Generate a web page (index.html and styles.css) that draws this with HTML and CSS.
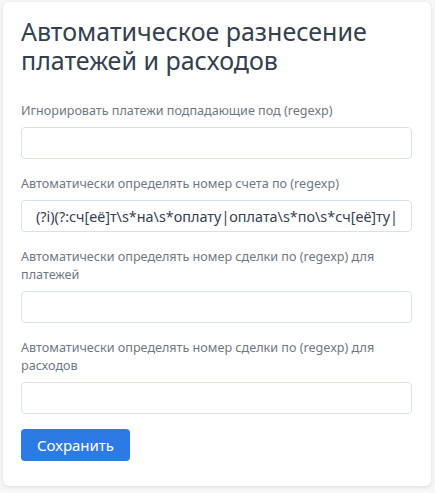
FILE: index.html
```html
<!DOCTYPE html>
<html lang="ru">
<head>
<meta charset="utf-8">
<link rel="stylesheet" href="styles.css">
</head>
<body>
<div class="card">
  <h1 class="title">Автоматическое разнесение платежей и расходов</h1>
  <div class="field">
    <label class="label">Игнорировать платежи подпадающие под (regexp)</label>
    <input class="input" type="text" value="">
  </div>
  <div class="field">
    <label class="label">Автоматически определять номер счета по (regexp)</label>
    <input class="input" type="text" value="(?i)(?:сч[её]т\s*на\s*оплату|оплата\s*по\s*сч[её]ту|">
  </div>
  <div class="field">
    <label class="label">Автоматически определять номер сделки по (regexp) для платежей</label>
    <input class="input" type="text" value="">
  </div>
  <div class="field">
    <label class="label">Автоматически определять номер сделки по (regexp) для расходов</label>
    <input class="input" type="text" value="">
  </div>
  <button class="btn" type="button">Сохранить</button>
</div>
</body>
</html>
```
FILE: styles.css
```css
html, body {
  margin: 0;
  padding: 0;
  background: #f7f7f8;
}
body {
  padding: 2px 4px 6px 3px;
  font-family: "Noto Sans", "Open Sans", sans-serif;
}
.card {
  background: #fff;
  border-radius: 6px;
  box-shadow: 0 1px 4px rgba(0,0,0,0.12);
  padding: 15px 19px 25px 18px;
  display: flex;
  flex-direction: column;
  align-items: flex-start;
}
.title {
  margin: 0 0 27px;
  font-size: 25px;
  line-height: 29px;
  font-weight: 400;
  color: #344050;
}
.field {
  width: 100%;
  display: flex;
  flex-direction: column;
  margin-bottom: 16px;
}
.field:last-of-type {
  margin-bottom: 15px;
}
.label {
  font-size: 12.6px;
  line-height: 18px;
  color: #6e7885;
  margin-bottom: 7px;
}
.input {
  box-sizing: border-box;
  width: 100%;
  height: 32px;
  border: 1px solid #d8e2ef;
  border-radius: 4px;
  padding: 4px 14px;
  font-family: "Noto Sans", "Open Sans", sans-serif;
  font-size: 14.4px;
  color: #344050;
  background: #fff;
  outline: none;
}
.btn {
  height: 32px;
  padding: 0 16px;
  border: none;
  border-radius: 4px;
  background: #2c7be5;
  color: #fff;
  font-family: "Noto Sans", "Open Sans", sans-serif;
  font-size: 15px;
  cursor: pointer;
}
```
